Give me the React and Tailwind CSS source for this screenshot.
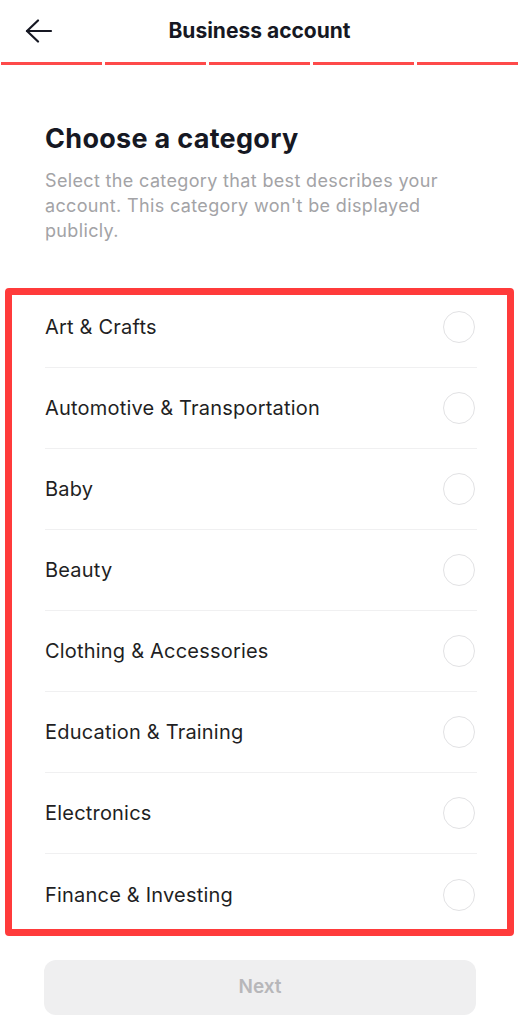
import React, { useState } from 'react';

const categories = [
    'Art & Crafts',
    'Automotive & Transportation',
    'Baby',
    'Beauty',
    'Clothing & Accessories',
    'Education & Training',
    'Electronics',
    'Finance & Investing',
];

function BackArrow() {
    return (
        <svg width="28" height="24" viewBox="0 0 28 24" fill="none" stroke="#161823" strokeWidth="2.2" strokeLinecap="round" strokeLinejoin="round">
            <path d="M2 12H26" />
            <path d="M13 1.5L2 12L13 22.5" />
        </svg>
    );
}

function App() {
    const [selected, setSelected] = useState(null);

    return (
        <div className="min-h-screen bg-white text-[#161823]" style={{ fontFamily: 'Inter, "Noto Sans", sans-serif' }}>
            {/* Header */}
            <header className="relative h-[62px] flex items-center justify-center">
                <button className="absolute left-[25px] top-[19px]">
                    <BackArrow />
                </button>
                <h1 className="text-[21px] font-bold">Business account</h1>
            </header>

            {/* Progress */}
            <div className="flex gap-[3px] px-[1px] h-[3px]">
                {[0, 1, 2, 3, 4].map((i) => (
                    <div key={i} className="flex-1 bg-[#fe4a4a]" />
                ))}
            </div>

            <main className="pl-[45px] pr-[42px]">
                <h2 className="mt-[58px] text-[27px] leading-[32px] font-bold tracking-[0.3px]">Choose a category</h2>
                <p className="mt-[13px] text-[18px] leading-[25px] tracking-[0.35px] text-[#a3a3a6]">
                    Select the category that best describes your account. This category won't be displayed publicly.
                </p>

                <div className="relative mt-[44px]">
                    <ul className="flex flex-col">
                        {categories.map((c, i) => (
                            <li
                                key={c}
                                onClick={() => setSelected(c)}
                                className={`h-[81px] flex items-center justify-between ${i < categories.length - 1 ? 'border-b border-[#f0f0f1]' : ''}`}
                            >
                                <span className="text-[20px] tracking-[0.2px] text-[#1f1f24]">{c}</span>
                                <span
                                    className={`w-[32px] h-[32px] rounded-full border-[1.5px] mr-[2px] ${selected === c ? 'border-[#fe2c55] border-[8px]' : 'border-[#e2e2e4]'}`}
                                />
                            </li>
                        ))}
                    </ul>
                    {/* annotation outline */}
                    <div className="pointer-events-none absolute left-[-40px] right-[-37px] top-[1px] bottom-[-1px] border-[7px] border-[#ff3b3b] rounded-[4px]" />
                </div>

                <button className="mt-[25px] mb-[9px] ml-[-1px] w-[432px] h-[55px] rounded-[12px] bg-[#efeff0] text-[19px] font-semibold text-[#b7b7ba]">
                    Next
                </button>
            </main>
        </div>
    );
}

export default App;
